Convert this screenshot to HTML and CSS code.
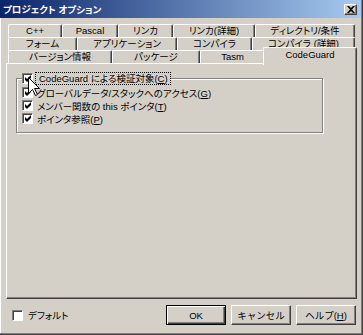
FILE: index.html
```html
<!DOCTYPE html>
<html lang="ja">
<head>
    <meta charset="UTF-8">
    <title>プロジェクト オプション</title>
    <link rel="stylesheet" href="styles.css">
</head>
<body>
    <div class="dialog">
        <div class="titlebar">
            <span class="title">プロジェクト オプション</span>
            <span class="close-btn">
                <svg width="8" height="7" viewBox="0 0 8 7">
                    <path d="M0 0 L2 0 L4 2 L6 0 L8 0 L5 3.5 L8 7 L6 7 L4 5 L2 7 L0 7 L3 3.5 Z" fill="#000"/>
                </svg>
            </span>
        </div>

        <div class="content">
            <div class="tabs">
                <div class="tab-row">
                    <div class="tab w54">C++</div>
                    <div class="tab w56">Pascal</div>
                    <div class="tab w55">リンカ</div>
                    <div class="tab w82">リンカ(詳細)</div>
                    <div class="tab w100">ディレクトリ/条件</div>
                </div>
                <div class="tab-row">
                    <div class="tab w69">フォーム</div>
                    <div class="tab w100">アプリケーション</div>
                    <div class="tab w75">コンパイラ</div>
                    <div class="tab w103">コンパイラ (詳細)</div>
                </div>
                <div class="tab-row">
                    <div class="tab w104">バージョン情報</div>
                    <div class="tab w88">パッケージ</div>
                    <div class="tab w65">Tasm</div>
                    <div class="tab active">CodeGuard</div>
                </div>
            </div>

            <div class="panel">
                <div class="group">
                    <div class="check-row caption">
                        <span class="checkbox checked"></span>
                        <span class="focus-label">CodeGuard による検証対象(<u>C</u>)</span>
                    </div>
                    <div class="check-row">
                        <span class="checkbox checked"></span>
                        <span>グローバルデータ/スタックへのアクセス(<u>G</u>)</span>
                    </div>
                    <div class="check-row">
                        <span class="checkbox checked"></span>
                        <span>メンバー関数の this ポインタ(<u>T</u>)</span>
                    </div>
                    <div class="check-row">
                        <span class="checkbox checked"></span>
                        <span>ポインタ参照(<u>P</u>)</span>
                    </div>
                </div>
            </div>

            <div class="footer">
                <div class="check-row">
                    <span class="checkbox"></span>
                    <span>デフォルト</span>
                </div>
                <div class="buttons">
                    <button class="btn default">OK</button>
                    <button class="btn">キャンセル</button>
                    <button class="btn">ヘルプ(<u>H</u>)</button>
                </div>
            </div>
        </div>

        <svg class="cursor" width="13" height="20" viewBox="0 0 13 20">
            <path d="M0.5 0.5 L0.5 16.5 L4.5 12.5 L7.5 18.5 L9.5 17.5 L6.5 11.5 L11.5 11.5 Z" fill="#fff" stroke="#000" stroke-width="1"/>
        </svg>
    </div>
</body>
</html>
```

FILE: styles.css
```css
body {
    margin: 0;
    font-family: "Liberation Sans", "Noto Sans CJK JP", sans-serif;
    font-size: 9.5px;
    font-feature-settings: "palt";
    color: #000;
}

.dialog {
    position: relative;
    width: 363px;
    height: 335px;
    box-sizing: border-box;
    background-color: #d4d0c8;
    border-right: 1px solid #404040;
    border-bottom: 1px solid #404040;
    box-shadow: inset -1px -1px #808080, inset 1px 0 #fff;
    overflow: hidden;
}

.titlebar {
    height: 18px;
    margin-right: 1px;
    padding: 0 4px 0 3px;
    display: flex;
    align-items: center;
    justify-content: space-between;
    background: linear-gradient(to right, #0a246a, #a6caf0);
    color: #fff;
    font-weight: bold;
}

.close-btn {
    width: 13px;
    height: 11px;
    box-sizing: border-box;
    display: flex;
    align-items: center;
    justify-content: center;
    background-color: #d4d0c8;
    border-top: 1px solid #fff;
    border-left: 1px solid #fff;
    border-right: 1px solid #404040;
    border-bottom: 1px solid #404040;
    box-shadow: inset -1px -1px #808080;
}

.content {
    padding: 6px 6px 0 6px;
}

.tabs {
    padding-left: 2px;
}

.tab-row {
    display: flex;
    height: 13px;
}

.tab {
    flex: none;
    box-sizing: border-box;
    height: 13px;
    border-top: 1px solid #fff;
    border-left: 1px solid #fff;
    border-right: 1px solid #404040;
    box-shadow: inset -1px 0 #808080;
    border-top-left-radius: 2px;
    border-top-right-radius: 2px;
    text-align: center;
    line-height: 12px;
    white-space: nowrap;
}

.tab.active {
    position: relative;
    z-index: 2;
    width: 94px;
    height: 18px;
    margin: -3px -2px 0 -2px;
    background-color: #d4d0c8;
    line-height: 14px;
}

.w54 { width: 54px; }
.w55 { width: 55px; }
.w56 { width: 56px; }
.w65 { width: 65px; }
.w69 { width: 69px; }
.w75 { width: 75px; }
.w82 { width: 82px; }
.w88 { width: 88px; }
.w100 { width: 100px; }
.w103 { width: 103px; }
.w104 { width: 104px; }

.panel {
    width: 351px;
    height: 236px;
    box-sizing: border-box;
    padding: 14px 0 0 9px;
    border-top: 1px solid #fff;
    border-left: 1px solid #fff;
    border-right: 1px solid #404040;
    border-bottom: 1px solid #404040;
    box-shadow: inset -1px -1px #808080;
}

.group {
    width: 307px;
    box-sizing: border-box;
    padding: 0 0 7px 5px;
    border: 1px solid #808080;
    box-shadow: inset 1px 1px #fff, 1px 1px #fff;
}

.check-row {
    display: flex;
    align-items: center;
    gap: 4px;
    height: 13px;
    white-space: nowrap;
}

.check-row.caption {
    width: max-content;
    margin-top: -7px;
    margin-bottom: 1px;
    background-color: #d4d0c8;
    gap: 3px;
}

.focus-label {
    padding: 0 2px 0 3px;
    line-height: 11px;
    outline: 1px dotted #000;
}

.checkbox {
    flex: none;
    width: 11px;
    height: 11px;
    box-sizing: border-box;
    background-color: #fff;
    border-top: 1px solid #808080;
    border-left: 1px solid #808080;
    border-right: 1px solid #fff;
    border-bottom: 1px solid #fff;
    box-shadow: inset 1px 1px #404040;
}

.checkbox.checked {
    background-image: url("data:image/svg+xml,%3Csvg xmlns='http://www.w3.org/2000/svg' width='7' height='7' viewBox='0 0 7 7'%3E%3Cpath d='M0 2 L2 4 L6 0 L6 3 L2 7 L0 5 Z' fill='%23000'/%3E%3C/svg%3E");
    background-repeat: no-repeat;
    background-position: 2px 1px;
}

.footer {
    display: flex;
    align-items: center;
    justify-content: space-between;
    padding: 6px 0 0 6px;
}

.footer .check-row {
    gap: 5px;
}

.buttons {
    display: flex;
    gap: 5px;
}

.btn {
    width: 60px;
    height: 20px;
    box-sizing: border-box;
    padding: 0;
    font-family: inherit;
    font-size: 9.5px;
    color: #000;
    background-color: #d4d0c8;
    border-top: 1px solid #fff;
    border-left: 1px solid #fff;
    border-right: 1px solid #404040;
    border-bottom: 1px solid #404040;
    box-shadow: inset -1px -1px #808080;
    border-radius: 0;
}

.btn.default {
    border: 1px solid #000;
    box-shadow: inset 1px 1px #fff, inset -1px -1px #404040, inset -2px -2px #808080;
}

.cursor {
    position: absolute;
    left: 28px;
    top: 77px;
}
```
